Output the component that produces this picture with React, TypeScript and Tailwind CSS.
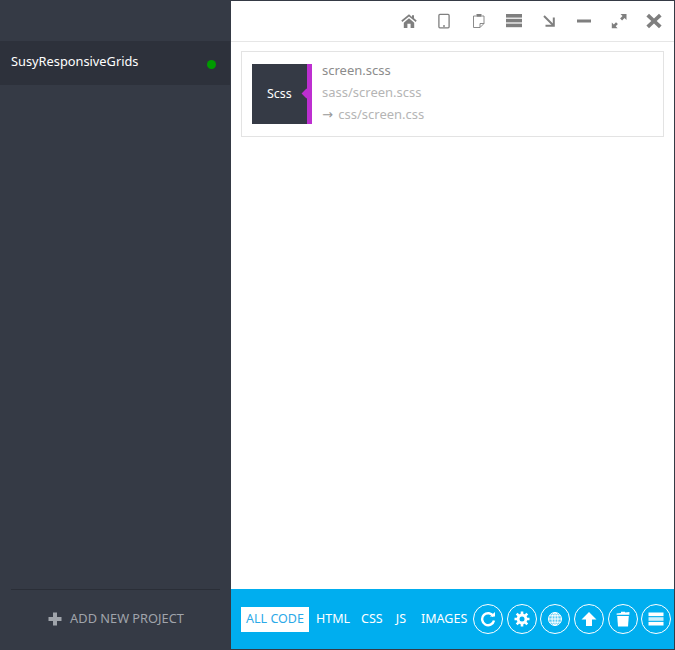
import React from "react";

const G = "#7f7f7f";

function TopIcon({ children }: { children: React.ReactNode }) {
  return (
    <svg width="16" height="16" viewBox="0 0 16 16" className="block">
      {children}
    </svg>
  );
}

const topIcons: React.ReactNode[] = [
  <g fill={G}>
    <path d="M8 1.2 .3 7.6 1.3 8.9 8 3.4l6.7 5.5 1-1.3-2.7-2.3V2.2h-2v1.7z" />
    <path d="M2.8 9.7 8 5.3l5.2 4.4V15H9.6V10.8H6.4V15H2.8z" />
  </g>,
  <g>
    <rect x="2.9" y="1.4" width="10.2" height="13.4" rx="1" fill="none" stroke={G} strokeWidth="1.3" />
    <rect x="7" y="12.3" width="2" height="1.4" fill={G} />
  </g>,
  <g fill="none" stroke={G} strokeWidth="0.9">
    <path d="M5.5 3H2.5v11.5h6.5l4-4V3h-2.5" />
    <rect x="5.5" y="1" width="5" height="2.8" fill={G} stroke="none" />
    <path d="M9 14.5V10.5H13" />
  </g>,
  <g fill={G}>
    <rect x="0" y="1" width="16" height="3.6" />
    <rect x="0" y="5.8" width="16" height="3.6" />
    <rect x="0" y="10.6" width="16" height="3.6" />
  </g>,
  <g fill="none" stroke={G} strokeWidth="2">
    <path d="M3 3l9 9" />
    <path d="M4.5 12.8h8.3V4.5" />
  </g>,
  <rect x="1" y="6.5" width="14" height="3" fill={G} />,
  <g fill={G}>
    <path d="M9.5 1H15.5V7l-2-2-2.4 2.4-2-2L11.5 3z" />
    <path d="M.8 9.4V15.2H6.6L4.7 13.3l2.2-2.2-1.9-1.9-2.2 2.2z" />
  </g>,
  <path d="M3 .8 8 5.6 13 .8 15.6 3.4 10.7 8l4.9 4.6L13 15.2 8 10.4 3 15.2.4 12.6 5.3 8 .4 3.4z" fill={G} />,
];

const bottomIcons: React.ReactNode[] = [
  <g fill="none" stroke="#fff" strokeWidth="2.4">
    <path d="M13.4 5.3A6 6 0 1 0 14 9.5" />
    <path d="M9.8 5.6h5.2V.9z" fill="#fff" stroke="none" />
  </g>,
  <g>
    <g stroke="#fff" strokeWidth="2.6">
      <path d="M8 .5v15M.5 8h15M2.7 2.7l10.6 10.6M13.3 2.7 2.7 13.3" />
    </g>
    <circle cx="8" cy="8" r="5.4" fill="#fff" />
    <circle cx="8" cy="8" r="2.5" fill="#00aeef" />
  </g>,
  <g fill="none" stroke="#fff" strokeWidth="1">
    <circle cx="8" cy="8" r="6.5" fill="#fff" fillOpacity="0.35" />
    <ellipse cx="8" cy="8" rx="3" ry="6.5" />
    <path d="M8 1.5v13M1.5 8h13M2.5 4.8h11M2.5 11.2h11" />
  </g>,
  <path d="M8 1 15.5 8.5H11V15H5V8.5H.5z" fill="#fff" />,
  <g fill="#fff">
    <path d="M1.6 2.6 6 2 6 .8h4l.2.8 4.2-.5v2.6H1.6z" />
    <path d="M2.2 5h11.6L13 15.5H3z" />
  </g>,
  <g fill="#fff">
    <rect x="0.5" y="1.5" width="15" height="3.6" />
    <rect x="0.5" y="6.2" width="15" height="3.6" fillOpacity="0.8" />
    <rect x="0.5" y="10.9" width="15" height="3.6" />
  </g>,
];

export default function App() {
  return (
    <div className="flex h-[650px] w-[675px] overflow-hidden bg-[#353a45] font-['Noto_Sans',sans-serif] border-t border-r border-b border-[#353a45]">
      <aside className="flex w-[231px] shrink-0 flex-col">
        <div className="mt-[40px] flex h-[44px] w-[230px] items-center justify-between bg-[#2d313b] pl-[11px] pr-[14px]">
          <span className="pb-[4px] text-[12.8px] leading-none text-white">SusyResponsiveGrids</span>
          <span className="mt-[3px] h-[9px] w-[9px] rounded-full bg-[#009a00]" />
        </div>
        <div className="mt-auto px-[11px]">
          <div className="flex h-[60px] items-center justify-center gap-[8px] border-t border-[#2a2e37] pb-[2px] pl-[1px]">
            <svg width="14" height="14" viewBox="0 0 14 14">
              <path d="M5 .5h4V5h4.5v4H9v4.5H5V9H.5V5H5z" fill="#a0a4ab" />
            </svg>
            <span className="text-[12.8px] leading-none text-[#a0a4ab]">ADD NEW PROJECT</span>
          </div>
        </div>
      </aside>
      <main className="flex min-w-0 flex-1 flex-col bg-white">
        <header className="flex h-[41px] shrink-0 items-center justify-end gap-[19px] border-b border-[#e6e6e6] pr-[12px]">
          {topIcons.map((ic, i) => (
            <TopIcon key={i}>{ic}</TopIcon>
          ))}
        </header>
        <section className="flex-1 px-[10px] pt-[9px]">
          <div className="flex h-[86px] items-center border border-[#e3e3e3] pl-[10px]">
            <div className="relative flex h-[60px] w-[60px] items-center border-r-[5px] border-[#bd2fd0] bg-[#353a45] pl-[15px] text-[12.5px] text-white">
              Scss
              <span className="absolute right-[-3px] top-[26px] h-[7px] w-[7px] rotate-45 bg-[#bd2fd0]" />
            </div>
            <div className="ml-[10px] flex flex-col gap-[4px] pb-[4px] text-[13px] leading-[18px]">
              <div className="text-[#8c8c8c]">screen.scss</div>
              <div className="text-[#b5b5b5]">sass/screen.scss</div>
              <div className="text-[#b5b5b5]">
                <span className="mr-[2px] font-['DejaVu_Sans',sans-serif] text-[#999999]">→</span> css/screen.css
              </div>
            </div>
          </div>
        </section>
        <footer className="flex h-[60px] shrink-0 items-center bg-[#00aeef] pl-[10px] text-[12.5px] text-white">
          <span className="flex h-[25px] w-[68px] items-center justify-center bg-white text-[#2aa9e8]">ALL CODE</span>
          <span className="ml-[7px]">HTML</span>
          <span className="ml-[11px]">CSS</span>
          <span className="ml-[13px]">JS</span>
          <span className="ml-[15px]">IMAGES</span>
          <div className="ml-[6px] flex gap-[3.6px]">
            {bottomIcons.map((ic, i) => (
              <span key={i} className="flex h-[30px] w-[30px] items-center justify-center rounded-full border border-white">
                <svg width="16" height="16" viewBox="0 0 16 16">{ic}</svg>
              </span>
            ))}
          </div>
        </footer>
      </main>
    </div>
  );
}
